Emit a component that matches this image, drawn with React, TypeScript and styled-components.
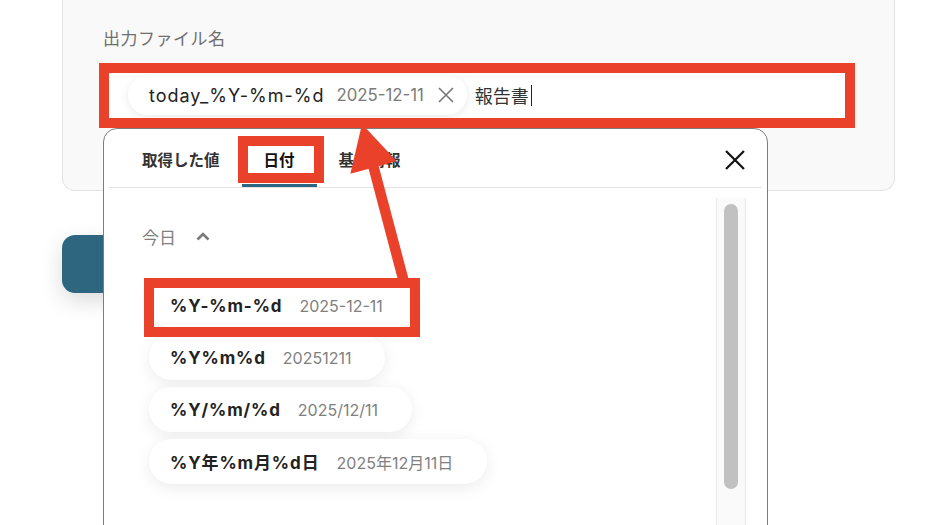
import React from "react";
import styled, { createGlobalStyle } from "styled-components";

const GlobalStyle = createGlobalStyle`
  html, body {
    margin: 0;
    padding: 0;
    background: #ffffff;
  }
  body {
    font-family: Inter, "Noto Sans CJK JP", sans-serif;
    color: #222;
  }
`;

const Page = styled.div`
  position: relative;
  width: 951px;
  height: 525px;
  overflow: hidden;
  padding: 0 56px 0 62px;
  box-sizing: border-box;
`;

const Card = styled.div`
  background: #f9f9f9;
  border: 1px solid #e4e4e4;
  border-top: none;
  border-radius: 0 0 13px 13px;
  padding: 27px 43px 67px 40px;
`;

const FieldLabel = styled.div`
  font-size: 17px;
  line-height: 24px;
  color: #6f6f6f;
  letter-spacing: 0.5px;
  margin-bottom: 16px;
`;

const FieldInput = styled.div`
  display: flex;
  align-items: center;
  height: 56px;
  box-sizing: border-box;
  padding: 0 24px;
  background: #fff;
  border: 1px solid #d9d9d9;
  border-radius: 8px;
`;

const Chip = styled.div`
  display: flex;
  align-items: center;
  height: 40px;
  padding: 0 12px 0 21px;
  border-radius: 20px;
  background: #fff;
  box-shadow: 0 2px 10px rgba(0, 0, 0, 0.09);
`;

const ChipKey = styled.span`
  font-size: 18px;
  letter-spacing: 1px;
  color: #222;
`;

const ChipValue = styled.span`
  font-size: 16.8px;
  color: #7a7a7a;
  margin-left: 12px;
`;

const ChipClose = styled.span`
  display: flex;
  margin-left: 13px;
`;

const TypedText = styled.span`
  font-size: 18px;
  color: #333;
  margin-left: 8px;
`;

const Caret = styled.span`
  width: 1.5px;
  height: 21px;
  background: #222;
  margin-left: 2px;
`;

const TealButton = styled.div`
  margin-top: 44px;
  width: 200px;
  height: 58px;
  border-radius: 13px;
  background: #2e6680;
  box-shadow: 0 8px 22px rgba(0, 0, 0, 0.14);
`;

const Popup = styled.div`
  position: absolute;
  left: 103px;
  top: 128px;
  width: 665px;
  height: 430px;
  box-sizing: border-box;
  background: #fff;
  border: 1px solid #7d7d7d;
  border-radius: 14px;
  display: flex;
  flex-direction: column;
`;

const TabBar = styled.div`
  display: flex;
  align-items: stretch;
  height: 58px;
  margin: 0 5px;
  padding-left: 11px;
  border-bottom: 1px solid #e3e3e3;
`;

const Tab = styled.div<{ $active?: boolean }>`
  display: flex;
  align-items: center;
  padding: 2px 22px 0;
  font-size: 15.5px;
  font-weight: ${(p) => (p.$active ? 700 : 600)};
  color: ${(p) => (p.$active ? "#111" : "#333")};
  box-shadow: ${(p) => (p.$active ? "inset 0 -3px 0 #2e6680" : "none")};
`;

const CloseButton = styled.div`
  display: flex;
  align-items: center;
  margin-left: auto;
  margin-right: 17px;
  padding-top: 4px;
`;

const PopupBody = styled.div`
  flex: 1;
  display: flex;
  min-height: 0;
`;

const OptionList = styled.div`
  flex: 1;
  padding: 36px 0 0 38px;
`;

const GroupHeader = styled.div`
  display: flex;
  align-items: center;
  gap: 20px;
  height: 24px;
  font-size: 17px;
  color: #808080;
  margin-bottom: 35px;
`;

const Options = styled.div`
  display: flex;
  flex-direction: column;
  align-items: flex-start;
  gap: 7px;
  padding-left: 7px;
`;

const Option = styled.div`
  display: flex;
  align-items: center;
  gap: 17px;
  height: 45px;
  padding: 0 34px 0 21px;
  border-radius: 23px;
  background: #fff;
  box-shadow: 0 4px 16px rgba(0, 0, 0, 0.08);
`;

const OptionKey = styled.span`
  font-size: 17px;
  font-weight: 700;
  letter-spacing: 0.9px;
  color: #222;
`;

const OptionValue = styled.span`
  font-size: 16px;
  color: #808080;
`;

const ScrollTrack = styled.div`
  width: 30px;
  box-sizing: border-box;
  margin: 10px 21px 0 0;
  padding: 6px 7px;
  background: #fafafa;
  border-left: 1px solid #e8e8e8;
  border-right: 1px solid #e8e8e8;
`;

const ScrollThumb = styled.div`
  height: 285px;
  border-radius: 8px;
  background: #c1c1c1;
`;

const Overlay = styled.svg`
  position: absolute;
  left: 0;
  top: 0;
  pointer-events: none;
`;

const options = [
  { key: "%Y-%m-%d", value: "2025-12-11" },
  { key: "%Y%m%d", value: "20251211" },
  { key: "%Y/%m/%d", value: "2025/12/11" },
  { key: "%Y年%m月%d日", value: "2025年12月11日" },
];

const RED = "#e9412a";

export default function App() {
  return (
    <Page>
      <GlobalStyle />
      <Card>
        <FieldLabel>出力ファイル名</FieldLabel>
        <FieldInput>
          <Chip>
            <ChipKey>today_%Y-%m-%d</ChipKey>
            <ChipValue>2025-12-11</ChipValue>
            <ChipClose>
              <svg width="18" height="18" viewBox="0 0 18 18">
                <path d="M2 2 L16 16 M16 2 L2 16" stroke="#7a7a7a" strokeWidth="1.7" />
              </svg>
            </ChipClose>
          </Chip>
          <TypedText>報告書</TypedText>
          <Caret />
        </FieldInput>
      </Card>
      <TealButton />

      <Popup>
        <TabBar>
          <Tab>取得した値</Tab>
          <Tab $active>日付</Tab>
          <Tab>基本情報</Tab>
          <CloseButton>
            <svg width="20" height="20" viewBox="0 0 20 20">
              <path d="M1 1 L19 19 M19 1 L1 19" stroke="#111" strokeWidth="2.2" />
            </svg>
          </CloseButton>
        </TabBar>
        <PopupBody>
          <OptionList>
            <GroupHeader>
              今日
              <svg width="14" height="9" viewBox="0 0 14 9">
                <polyline points="1.5,7.5 7,2 12.5,7.5" fill="none" stroke="#7a7a7a" strokeWidth="2.6" />
              </svg>
            </GroupHeader>
            <Options>
              {options.map((o) => (
                <Option key={o.key}>
                  <OptionKey>{o.key}</OptionKey>
                  <OptionValue>{o.value}</OptionValue>
                </Option>
              ))}
            </Options>
          </OptionList>
          <ScrollTrack>
            <ScrollThumb />
          </ScrollTrack>
        </PopupBody>
      </Popup>

      <Overlay width="951" height="525" viewBox="0 0 951 525">
        <rect x="104" y="68" width="746" height="55" fill="none" stroke={RED} strokeWidth="10" />
        <rect x="243" y="141" width="76" height="37" fill="none" stroke={RED} strokeWidth="10" />
        <rect x="149" y="283" width="266" height="49" fill="none" stroke={RED} strokeWidth="10" />
        <line x1="373" y1="165" x2="405" y2="286" stroke={RED} strokeWidth="10.5" />
        <polygon points="362,124 396.8,161.3 350.4,173.7" fill={RED} />
      </Overlay>
    </Page>
  );
}
